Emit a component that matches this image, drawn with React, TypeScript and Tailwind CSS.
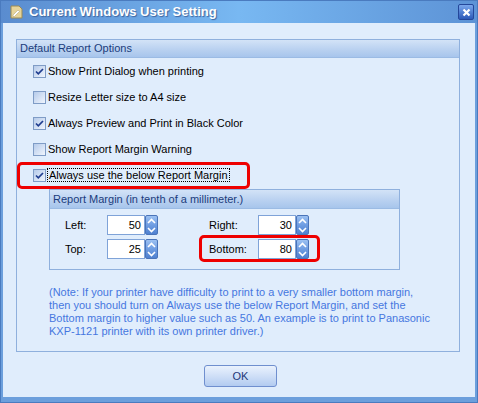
import React from "react";

const options = [
  { label: "Show Print Dialog when printing", checked: true },
  { label: "Resize Letter size to A4 size", checked: false },
  { label: "Always Preview and Print in Black Color", checked: true },
  { label: "Show Report Margin Warning", checked: false },
];

const CheckBox = ({ checked }: { checked: boolean }) => (
  <div className="w-[13px] h-[13px] shrink-0 border border-[#7f9cc6] bg-gradient-to-br from-[#b6cbea] to-[#f0f5fd] flex items-center justify-center">
    {checked && (
      <svg width="11" height="11" viewBox="0 0 11 11">
        <path d="M2 5.5 L4.3 7.8 L9 3" fill="none" stroke="#1f3d8f" strokeWidth="1.7" />
      </svg>
    )}
  </div>
);

const Spinner = () => (
  <div className="w-[13px] h-[20px] shrink-0 rounded-[2px] border border-[#4a74b9] bg-gradient-to-b from-[#9cc1f2] via-[#6f9de2] to-[#4f81d0] flex flex-col items-center justify-around">
    <svg width="9" height="6" viewBox="0 0 9 6">
      <path d="M1 5 L4.5 1.5 L8 5" fill="none" stroke="#ffffff" strokeWidth="1.6" />
    </svg>
    <svg width="9" height="6" viewBox="0 0 9 6">
      <path d="M1 1 L4.5 4.5 L8 1" fill="none" stroke="#ffffff" strokeWidth="1.6" />
    </svg>
  </div>
);

const NumberField = ({ value }: { value: string }) => (
  <div className="flex w-[51px] h-[20px]">
    <div className="flex-1 bg-white border border-[#7fa3d8] flex items-center justify-end pr-[3px] text-black">
      {value}
    </div>
    <Spinner />
  </div>
);

const GroupHeader = ({ children, h }: { children: React.ReactNode; h: string }) => (
  <div className={`${h} flex items-center pl-[3px] border-b border-[#9bbbe4] bg-gradient-to-b from-[#d3e3f7] via-[#bcd3f1] to-[#a7c5ec] text-[#1b3c7c]`}>
    {children}
  </div>
);

export default function App() {
  return (
    <div className="w-[478px] h-[403px] border border-[#4a7bbf] bg-[#6c9fdc] flex flex-col font-['Liberation_Sans',Arial,sans-serif] text-[11px]">
      {/* Title bar */}
      <div className="h-[22px] flex items-center bg-gradient-to-r from-[#5a8ccf] via-[#78b8f2] to-[#5d93d6] relative">
        <svg className="ml-[9px]" width="13" height="14" viewBox="0 0 13 14">
          <path d="M1 1 H9 L12 4 V13 H1 Z" fill="#e6d49a" stroke="#9b8a55" strokeWidth="1" />
          <path d="M3 10 L8 5 L9.5 6.5 L4.5 11.5 L3 11.5 Z" fill="#ffffff" stroke="#b8a878" strokeWidth="0.6" />
        </svg>
        <span className="ml-[6px] text-white font-bold text-[13px] [text-shadow:1px_1px_1px_#3d659f]">
          Current Windows User Setting
        </span>
        <div className="absolute right-[3px] top-[3px] w-[16px] h-[16px] rounded-[2px] border border-[#24479a] bg-gradient-to-b from-[#7aa7ec] to-[#2d5ab8] flex items-center justify-center">
          <svg width="9" height="9" viewBox="0 0 9 9">
            <path d="M1.5 1.5 L7.5 7.5 M7.5 1.5 L1.5 7.5" stroke="#ffffff" strokeWidth="2.2" />
          </svg>
        </div>
      </div>

      {/* Client area */}
      <div className="h-[374px] mx-[2px] bg-[#e0edfc] pl-[13px] pt-[16px] flex flex-col">
        <div className="w-[444px] h-[313px] border border-[#8fb0dd] flex flex-col">
          <GroupHeader h="h-[18px]">Default Report Options</GroupHeader>

          {options.map((o) => (
            <div key={o.label} className="h-[26px] flex items-center pl-[16px] gap-[2px] text-black">
              <CheckBox checked={o.checked} />
              <span>{o.label}</span>
            </div>
          ))}

          <div className="h-[26px] flex items-center pl-[16px] gap-[1px] text-black relative">
            <CheckBox checked />
            <span className="border border-dotted border-black px-[1px] leading-[12px]">
              Always use the below Report Margin
            </span>
            <div className="absolute left-0 top-0 w-[233px] h-[27px] border-[3px] border-[#ee0000] rounded-[5px]" />
          </div>

          {/* Report margin group */}
          <div className="ml-[32px] mt-[1px] w-[351px] border border-[#8fb0dd] flex flex-col">
            <GroupHeader h="h-[19px]">Report Margin (in tenth of a millimeter.)</GroupHeader>
            <div className="pt-[6px] pb-[10px] pl-[15px] flex flex-col gap-[4px] text-black">
              <div className="flex items-center">
                <span className="w-[42px]">Left:</span>
                <NumberField value="50" />
                <span className="ml-[51px] w-[49px]">Right:</span>
                <NumberField value="30" />
              </div>
              <div className="flex items-center">
                <span className="w-[42px]">Top:</span>
                <NumberField value="25" />
                <div className="ml-[51px] flex items-center relative">
                  <span className="w-[49px]">Bottom:</span>
                  <NumberField value="80" />
                  <div className="absolute left-[-10px] top-[-4px] w-[121px] h-[27px] border-[3px] border-[#ee0000] rounded-[5px]" />
                </div>
              </div>
            </div>
          </div>

          <p className="ml-[32px] mt-[16px] leading-[13px] text-[#4677e0]">
            (Note: If your printer have difficulty to print to a very smaller bottom margin,
            <br />
            then you should turn on Always use the below Report Margin, and set the
            <br />
            Bottom margin to higher value such as 50. An example is to print to Panasonic
            <br />
            KXP-1121 printer with its own printer driver.)
          </p>
        </div>

        <div className="flex mt-[13px] pl-[188px]">
          <button className="w-[73px] h-[22px] rounded-[3px] border border-[#6f8fcf] bg-gradient-to-b from-[#eaf2fd] via-[#cfdff7] to-[#b2cbf0] text-[#1d3878]">
            OK
          </button>
        </div>
      </div>
    </div>
  );
}
